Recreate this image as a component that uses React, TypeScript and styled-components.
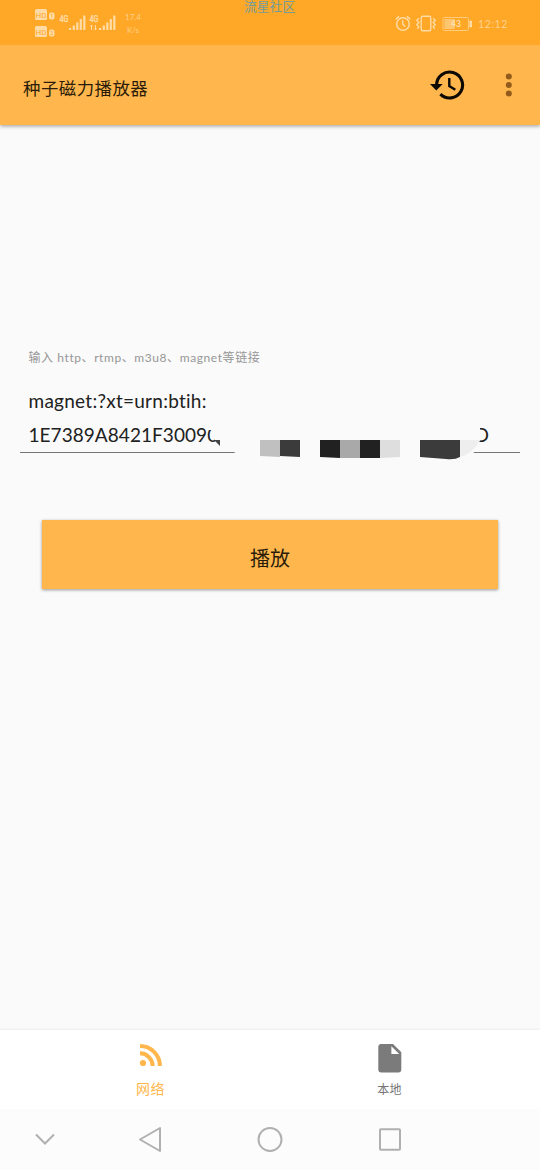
import React from "react";
import styled, { createGlobalStyle } from "styled-components";

const GlobalStyle = createGlobalStyle`
  * { box-sizing: border-box; }
  body { margin: 0; background: #fafafa; font-family: Lato, "Noto Sans CJK SC", sans-serif; }
  svg { display: block; flex: none; }
`;

const Screen = styled.div`
  width: 540px;
  height: 1170px;
  display: flex;
  flex-direction: column;
  background: #fafafa;
  overflow: hidden;
`;

const StatusBar = styled.header`
  position: relative;
  z-index: 1;
  height: 45px;
  flex: none;
  display: flex;
  justify-content: space-between;
  align-items: flex-start;
  padding: 8px 32px 0 34px;
  background: #ffa726;
  color: #ffdca6;
`;

const Watermark = styled.div`
  position: absolute;
  top: 0;
  left: 244px;
  font-size: 12.8px;
  line-height: 13px;
  white-space: nowrap;
  color: #739c9a;
`;

const StatusGroup = styled.div<{ $gap: number; $top?: number }>`
  display: flex;
  align-items: center;
  gap: ${(p) => p.$gap}px;
  padding-top: ${(p) => p.$top ?? 0}px;
`;

const Speed = styled.div`
  width: 20px;
  margin-left: 4px;
  font-size: 8px;
  line-height: 13px;
  text-align: center;
  color: #ffd08a;
`;

const Clock = styled.time`
  width: 30px;
  padding-top: 2px;
  font-size: 10.5px;
  line-height: 16px;
  letter-spacing: 0.6px;
  white-space: nowrap;
  color: #ffd28e;
`;

const AppBar = styled.div`
  position: relative;
  height: 80px;
  flex: none;
  display: flex;
  align-items: center;
  padding: 0 28px 0 23px;
  background: #ffb74d;
  box-shadow: 0 1px 4px rgba(0, 0, 0, 0.4);
`;

const Title = styled.h1`
  margin: 8px auto 0 0;
  font-size: 17.4px;
  line-height: 26px;
  font-weight: 400;
  letter-spacing: 0.5px;
  color: #2b1c0a;
`;

const IconButton = styled.button<{ $right?: number }>`
  display: flex;
  padding: 0;
  margin: 0 ${(p) => p.$right ?? 0}px 1px 0;
  border: 0;
  background: none;
`;

const Main = styled.main`
  flex: 1;
  display: flex;
  flex-direction: column;
  padding: 223px 20px 0;
`;

const Hint = styled.label`
  padding-left: 8.5px;
  font-size: 12px;
  line-height: 20px;
  letter-spacing: 0.58px;
  white-space: pre;
  color: #969696;
`;

const Field = styled.div`
  position: relative;
  height: 85px;
  padding: 16px 0 0 8.5px;
  border-bottom: 1px solid #757575;
  font-size: 19px;
  line-height: 34px;
  color: #212121;
`;

const FieldLine = styled.div<{ $spacing: number }>`
  display: flex;
  height: 34px;
  letter-spacing: ${(p) => p.$spacing}px;
  white-space: nowrap;
`;

const LastChar = styled.span`
  margin-left: auto;
  padding-right: 31px;
`;

const Redaction = styled.svg`
  position: absolute;
  left: 0;
  bottom: -13px;
`;

const PlayButton = styled.button`
  height: 69px;
  margin: 67px 22px 0;
  padding: 6px 0 0;
  border: 0;
  background: #ffb74d;
  box-shadow: 0 1px 3px rgba(0, 0, 0, 0.4);
  font-family: inherit;
  font-size: 20px;
  line-height: 28px;
  color: #2b1c0a;
`;

const Tabs = styled.nav`
  height: 79px;
  flex: none;
  display: flex;
  padding: 0 31px;
  background: #fff;
  box-shadow: 0 -1px 2px rgba(0, 0, 0, 0.06);
`;

const Tab = styled.div<{ $active?: boolean }>`
  flex: 1;
  display: flex;
  flex-direction: column;
  align-items: center;
  padding-top: 13px;
  color: ${(p) => (p.$active ? "#ffb74d" : "#757575")};
  font-size: ${(p) => (p.$active ? 14 : 12)}px;
  line-height: 20px;
  letter-spacing: ${(p) => (p.$active ? 0.6 : 0.2)}px;
`;

const TabIcon = styled.div<{ $height: number }>`
  height: ${(p) => p.$height}px;
`;

const SystemNav = styled.footer`
  height: 61px;
  flex: none;
  display: flex;
  align-items: center;
  padding-left: 33px;
  background: #fcfcfc;
`;

const NavKey = styled.div<{ $width: number }>`
  width: ${(p) => p.$width}px;
`;

const HdBadges = () => (
  <svg width="22" height="31" viewBox="0 0 22 31" fill="#ffdca6">
    {[0, 17].map((y, i) => (
      <g key={y} transform={`translate(0 ${y})`}>
        <rect x="1" y="1" width="12" height="11" rx="1.5" />
        <text x="7" y="9.6" fontSize="8" textAnchor="middle" fill="#ffa726" fontFamily="Roboto, sans-serif">HD</text>
        <rect x="15" y="4.5" width="5.5" height="7" rx="2" />
        <text x="17.8" y="10.3" fontSize="6" textAnchor="middle" fill="#ffa726" fontFamily="Roboto, sans-serif">{i + 1}</text>
      </g>
    ))}
  </svg>
);

const Signal = ({ data }: { data?: boolean }) => (
  <svg width="27" height="18" viewBox="0 0 27 18" fill="#ffdca6">
    <text x="0.5" y="7" fontSize="8.5" fontWeight="500" textLength="9" lengthAdjust="spacingAndGlyphs" fontFamily="Roboto, sans-serif" stroke="#ffdca6" strokeWidth=".25">4G</text>
    {data && <path d="M2.5 10v5M1.2 11.5 2.5 10l1.2 1.5M6.5 10v5M5.2 13.5l1.3 1.5 1.3-1.5" fill="none" stroke="#ffdca6" strokeWidth="1" />}
    <path d="M10 13h2.2v2H10zM13.7 10.5h2.2V15h-2.2zM17.2 7.5h2.2V15h-2.2zM20.7 4h2.2v11h-2.2zM24.2 0.5h2.2V15h-2.2z" />
  </svg>
);

const AlarmIcon = () => (
  <svg width="17" height="17" viewBox="0 0 17 17" fill="none" stroke="#ffdca6" strokeWidth="1.5">
    <circle cx="8" cy="9" r="6.3" />
    <path d="M7.7 5.3V9l2.5 2.7M.7 4.2 4 1.4M15.3 4.2 12 1.4" />
  </svg>
);

const VibrateIcon = () => (
  <svg width="21" height="17" viewBox="0 0 21 17" fill="none" stroke="#ffdca6" strokeWidth="1.4">
    <rect x="5.2" y="1.2" width="9.6" height="14.6" rx="1.5" />
    <path d="M2.8 3.2.8 5.4l2 2.1-2 2.2 2 2.1-1.5 2M17.2 3.2l2 2.2-2 2.1 2 2.2-2 2.1 1.5 2" />
  </svg>
);

const BatteryIcon = () => (
  <svg width="32" height="15" viewBox="0 0 32 15" fill="none">
    <rect x="2" y="1.5" width="25.5" height="13" rx="1.2" stroke="#ffcb7d" />
    <rect x="3.5" y="3" width="10" height="10" fill="#ffc66f" />
    <path d="M29 5h1.5v6H29z" fill="#ffdca6" stroke="#ffdca6" />
    <text x="15" y="11" fontSize="8.5" textAnchor="middle" fill="#ffecd0" fontFamily="Lato, sans-serif">43</text>
  </svg>
);

const HistoryIcon = () => (
  <svg width="36" height="32" viewBox="0 0 36 32" fill="none" stroke="#0d0903">
    <path d="M7.6 16A13 13 0 1 1 11.4 25.2" strokeWidth="3.1" />
    <path d="M1 14.9h12.7L7.3 21.4z" fill="#0d0903" stroke="none" />
    <path d="M20.3 9v8.1l6 3.6" strokeWidth="2.4" />
  </svg>
);

const MoreIcon = () => (
  <svg width="7" height="24" viewBox="0 0 7 24" fill="#925b1c">
    <circle cx="3.8" cy="3.5" r="3" />
    <circle cx="3.8" cy="12" r="3" />
    <circle cx="3.8" cy="20.5" r="3" />
  </svg>
);

const FeedIcon = () => (
  <svg width="24" height="24" viewBox="0 0 24 24" fill="none" stroke="#ffb74d" strokeWidth="4">
    <circle cx="4" cy="20" r="3.1" fill="#ffb74d" stroke="none" />
    <path d="M1 10.3A12.8 12.8 0 0 1 13.7 23M1 3.1A19.9 19.9 0 0 1 20.9 23" />
  </svg>
);

const FileIcon = () => (
  <svg width="24" height="30" viewBox="0 0 24 30">
    <path d="M3 1h12l8.3 8.3V26.5a3 3 0 0 1-3 3H3.3a3 3 0 0 1-3-3V4A3 3 0 0 1 3 1z" fill="#7b7b7b" />
    <path d="M13.4 3.3v7.8h7.8z" fill="#fff" />
  </svg>
);

export default function App() {
  return (
    <Screen>
      <GlobalStyle />
      <StatusBar>
        <StatusGroup $gap={3}>
          <HdBadges />
          <Signal />
          <Signal data />
          <Speed>17.4<br />K/s</Speed>
        </StatusGroup>
        <Watermark>流星社区</Watermark>
        <StatusGroup $gap={5} $top={6}>
          <StatusGroup $gap={4}>
            <AlarmIcon />
            <VibrateIcon />
            <BatteryIcon />
          </StatusGroup>
          <Clock>12:12</Clock>
        </StatusGroup>
      </StatusBar>
      <AppBar>
        <Title>种子磁力播放器</Title>
        <IconButton $right={40} aria-label="历史"><HistoryIcon /></IconButton>
        <IconButton aria-label="更多"><MoreIcon /></IconButton>
      </AppBar>
      <Main>
        <Hint>输入 http、rtmp、m3u8、magnet等链接</Hint>
        <Field>
          <FieldLine $spacing={0.26}>magnet:?xt=urn:btih:</FieldLine>
          <FieldLine $spacing={0.05}>
            <span>1E7389A8421F30090</span>
            <LastChar>D</LastChar>
          </FieldLine>
          <Redaction width="500" height="50" viewBox="0 0 500 50">
            <path d="M187 5h254l19 1v19q-2 8-9 16H220l-6-4-16-1-2-10-4-4-1-7h-4z" fill="#fafafa" />
            <path d="M194 25h6v6z" fill="#444" />
            <path d="M240 25h20v17l-20-1z" fill="#c0c0c0" />
            <path d="M260 25h20v17l-20-1z" fill="#3b3b3b" />
            <path d="M300 25h20v18l-20-1z" fill="#212121" />
            <path d="M320 25h20v18h-20z" fill="#a9a9a9" />
            <path d="M340 25h20v18h-20z" fill="#212121" />
            <path d="M360 25h20v17l-20 1z" fill="#dedede" />
            <path d="M400 25h40v17q-5 3-14 2l-26-2z" fill="#3b3b3b" />
            <path d="M440 25h20q-7 14-20 17z" fill="#eee" />
          </Redaction>
        </Field>
        <PlayButton>播放</PlayButton>
      </Main>
      <Tabs>
        <Tab $active>
          <TabIcon $height={36}><FeedIcon /></TabIcon>
          网络
        </Tab>
        <Tab>
          <TabIcon $height={37}><FileIcon /></TabIcon>
          本地
        </Tab>
      </Tabs>
      <SystemNav>
        <NavKey $width={104}>
          <svg width="24" height="24" viewBox="0 0 24 24" fill="none" stroke="#b0b0b0" strokeWidth="2"><path d="m3 6.5 9 9 9-9" /></svg>
        </NavKey>
        <NavKey $width={119}>
          <svg width="26" height="28" viewBox="0 0 26 28" fill="none" stroke="#b0b0b0" strokeWidth="2" strokeLinejoin="round"><path d="M23 2v23L3 13.5z" /></svg>
        </NavKey>
        <NavKey $width={121}>
          <svg width="28" height="28" viewBox="0 0 28 28" fill="none" stroke="#b0b0b0" strokeWidth="2"><circle cx="14" cy="13.5" r="11.5" /></svg>
        </NavKey>
        <NavKey $width={26}>
          <svg width="26" height="26" viewBox="0 0 26 26" fill="none" stroke="#b0b0b0" strokeWidth="2"><rect x="3" y="2.2" width="20" height="20.5" rx=".8" /></svg>
        </NavKey>
      </SystemNav>
    </Screen>
  );
}
